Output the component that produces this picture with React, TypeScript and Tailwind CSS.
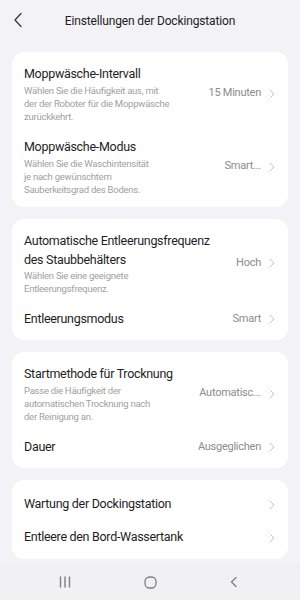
import React from "react";

const Chevron = () => (
  <svg width="6" height="10" viewBox="0 0 6 10" fill="none">
    <path d="M1 1 L5 5 L1 9" stroke="#c4c4c8" strokeWidth="1" strokeLinecap="round" strokeLinejoin="round" />
  </svg>
);

type RowProps = {
  title: string[];
  sub?: string[];
  value?: string;
  titleLh?: string;
};

const Row = ({ title, sub, value, titleLh = "leading-[20px]" }: RowProps) => (
  <div className="flex items-center py-[7px] pl-3 pr-[13px]">
    <div className="flex-1 min-w-0">
      {title.map((t, i) => (
        <div key={i} className={`text-[12.5px] tracking-[-0.3px] ${titleLh} text-[#1e1e1e] whitespace-nowrap`}>
          {t}
        </div>
      ))}
      {sub &&
        sub.map((s, i) => (
          <div key={i} className="text-[9.5px] tracking-[-0.25px] leading-[13px] text-[#a0a0a0] whitespace-nowrap">
            {s}
          </div>
        ))}
    </div>
    {value && (
      <div className="text-[11px] tracking-[-0.25px] text-[#8c8c8c] mr-[8px] whitespace-nowrap">{value}</div>
    )}
    <Chevron />
  </div>
);

const Card = ({ children }: { children: React.ReactNode }) => (
  <div className="mx-3 rounded-[12px] bg-white pt-[5px] pb-[4px]">{children}</div>
);

export default function App() {
  return (
    <div
      className="w-[300px] h-[600px] bg-[#f2f2f7] flex flex-col overflow-hidden"
      style={{ fontFamily: "Roboto, 'Noto Sans', sans-serif" }}
    >
      <div className="h-[40px] flex items-center relative">
        <svg width="10" height="16" viewBox="0 0 10 16" className="absolute left-[13px] top-[12px]" fill="none">
          <path d="M8 1.5 L2 8 L8 14.5" stroke="#333" strokeWidth="1.2" strokeLinecap="round" strokeLinejoin="round" />
        </svg>
        <div className="w-full text-center text-[12px] tracking-[-0.15px] text-[#222] pt-[2px]">
          Einstellungen der Dockingstation
        </div>
      </div>

      <div className="mt-3 flex flex-col gap-3">
        <Card>
          <Row
            title={["Moppwäsche-Intervall"]}
            sub={["Wählen Sie die Häufigkeit aus, mit", "der der Roboter für die Moppwäsche", "zurückkehrt."]}
            value="15 Minuten"
          />
          <Row
            title={["Moppwäsche-Modus"]}
            sub={["Wählen Sie die Waschintensität", "je nach gewünschtem", "Sauberkeitsgrad des Bodens."]}
            value="Smart..."
          />
        </Card>
        <Card>
          <Row
            title={["Automatische Entleerungsfrequenz", "des Staubbehälters"]}
            titleLh="leading-[19px]"
            sub={["Wählen Sie eine geeignete", "Entleerungsfrequenz."]}
            value="Hoch"
          />
          <Row title={["Entleerungsmodus"]} value="Smart" />
        </Card>
        <Card>
          <Row
            title={["Startmethode für Trocknung"]}
            sub={["Passe die Häufigkeit der", "automatischen Trocknung nach", "der Reinigung an."]}
            value="Automatisc..."
          />
          <Row title={["Dauer"]} value="Ausgeglichen" />
        </Card>
        <div className="mx-3 rounded-[12px] bg-white pt-2 pb-[5px]">
          <div className="h-[33px] flex items-center pl-3 pr-[13px]">
            <div className="flex-1 text-[12.5px] tracking-[-0.3px] text-[#1e1e1e]">Wartung der Dockingstation</div>
            <Chevron />
          </div>
          <div className="h-[33px] flex items-center pl-3 pr-[13px]">
            <div className="flex-1 text-[12.5px] tracking-[-0.3px] text-[#1e1e1e]">Entleere den Bord-Wassertank</div>
            <Chevron />
          </div>
        </div>
      </div>

      <div className="mt-auto h-[36px] bg-[#f1f1f3] flex items-center justify-between pl-[59px] pr-[62px]">
        <svg width="12" height="12" viewBox="0 0 12 12" fill="none">
          <path d="M1.5 0.5 V11.5 M6 0.5 V11.5 M10.5 0.5 V11.5" stroke="#808080" strokeWidth="1.4" />
        </svg>
        <svg width="13" height="13" viewBox="0 0 13 13" fill="none">
          <rect x="1" y="1" width="11" height="11" rx="4.5" stroke="#808080" strokeWidth="1.3" />
        </svg>
        <svg width="9" height="12" viewBox="0 0 9 12" fill="none">
          <path d="M7 1.5 L2.5 6 L7 10.5" stroke="#808080" strokeWidth="1.3" strokeLinecap="round" strokeLinejoin="round" />
        </svg>
      </div>
    </div>
  );
}
